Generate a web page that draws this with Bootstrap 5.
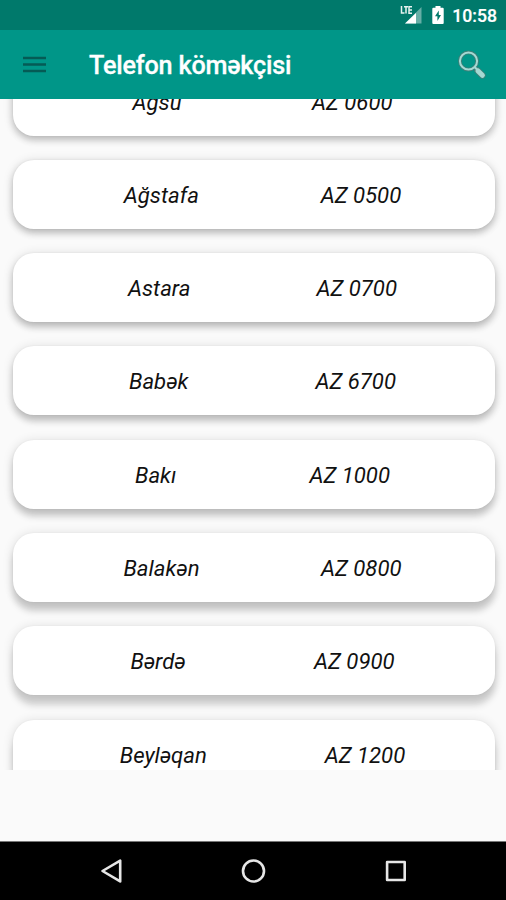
<!DOCTYPE html>
<html lang="az">
<head>
<meta charset="utf-8">
<meta name="viewport" content="width=device-width, initial-scale=1">
<title>Telefon köməkçisi</title>
<link href="https://cdn.jsdelivr.net/npm/bootstrap@5.3.0/dist/css/bootstrap.min.css" rel="stylesheet">
<style>
body { font-family: Roboto, "Noto Sans", sans-serif; background: #fafafa; }
.screen { height: 900px; }
.status-bar { height: 30px; background: #00796b; padding-right: 9px; }
.clock { font-size: 17.6px; font-weight: 500; line-height: 28px; margin-left: 6px; padding-top: 2px; -webkit-text-stroke: .2px #fff; }
.app-bar { height: 68.5px; background: #009688; padding: 2px 19px 0 22px; }
.app-title { font-size: 25.2px; font-weight: 500; letter-spacing: -.2px; line-height: 32px; margin-left: 42px; padding-top: 2px; -webkit-text-stroke: .3px #fff; }
.viewport { height: 671.5px; padding: 0 11.5px 0 12.5px; }
.city-list { margin-top: -32px; }
.city { height: 69px; margin-bottom: 24.3px; border-radius: 21px; padding: 1px 0 0 18px; gap: 28.5px;
  font-size: 22.15px; line-height: 30px; color: #111; font-style: italic;
  box-shadow: 0 var(--drop) var(--soft) rgba(0,0,0,var(--tone)), 0 1px 11px rgba(0,0,0,.12), 0 0 2px rgba(0,0,0,.05); }
.nav-keys { height: 59px; background: #000; border-top: 1px solid #777; }
</style>
</head>
<body>
<div class="screen d-flex flex-column overflow-hidden">
  <header class="flex-shrink-0 text-white">
    <div class="status-bar d-flex align-items-center justify-content-end">
      <svg width="22" height="20" viewBox="0 0 22 20">
        <path d="M21.500 2v16.500H5z" fill="#fff" opacity=".4"/><path d="M16 8v10.500H5z" fill="#fff"/>
        <path d="M1.500 1v7h3M4 1.700h4M6 1.700V8.500M12 1.700H9V8.200h3M9 5h3" fill="none" stroke="#e6f3f1" stroke-width="1.5"/>
      </svg>
      <svg class="ms-2" width="16" height="20" viewBox="0 0 16 20">
        <path d="M5.500 1h5v1.800h2.200q1 0 1 1v14.200q0 1-1 1H3.300q-1 0-1-1V3.800q0-1 1-1h2.200z" fill="#fff"/>
        <path d="M8.800 5.500 5 11.300h2.400V16L11 10H8.800z" fill="#00796b"/>
      </svg>
      <span class="clock">10:58</span>
    </div>
    <div class="app-bar d-flex align-items-center">
      <svg width="25" height="20" viewBox="0 0 25 20"><path d="M1 3h23M1 9.5h23M1 16h23" stroke="#055b55" stroke-width="2.4"/></svg>
      <h1 class="app-title mb-0">Telefon köməkçisi</h1>
      <svg class="ms-auto" width="30" height="30" viewBox="0 0 30 30">
        <path d="m20.5 20.5 4.8 4.8" stroke="#437f78" stroke-width="6.6" stroke-linecap="round"/>
        <circle cx="11.5" cy="11" r="8.6" fill="none" stroke="#3f7f78" stroke-width="3.8"/>
        <circle cx="11.5" cy="11" r="8.6" fill="none" stroke="#a5d9d3" stroke-width="2"/>
        <path d="m17.8 17.3 3 3" stroke="#a5d9d3" stroke-width="2"/>
        <path d="m21 21 4.4 4.3" stroke="#a5d9d3" stroke-width="5" stroke-linecap="round"/>
      </svg>
    </div>
  </header>
  <main class="viewport flex-shrink-0 overflow-hidden">
    <div class="city-list">
      <div class="city bg-white d-flex align-items-center justify-content-evenly" style="--drop:4px;--soft:7px;--tone:.2"><span>Ağsu</span><span>AZ 0600</span></div>
      <div class="city bg-white d-flex align-items-center justify-content-evenly" style="--drop:4px;--soft:7px;--tone:.21"><span>Ağstafa</span><span>AZ 0500</span></div>
      <div class="city bg-white d-flex align-items-center justify-content-evenly" style="--drop:5px;--soft:7px;--tone:.21"><span>Astara</span><span>AZ 0700</span></div>
      <div class="city bg-white d-flex align-items-center justify-content-evenly" style="--drop:6px;--soft:7px;--tone:.2"><span>Babək</span><span>AZ 6700</span></div>
      <div class="city bg-white d-flex align-items-center justify-content-evenly" style="--drop:7px;--soft:7px;--tone:.19"><span>Bakı</span><span>AZ 1000</span></div>
      <div class="city bg-white d-flex align-items-center justify-content-evenly" style="--drop:9px;--soft:7px;--tone:.18"><span>Balakən</span><span>AZ 0800</span></div>
      <div class="city bg-white d-flex align-items-center justify-content-evenly" style="--drop:10px;--soft:7px;--tone:.17"><span>Bərdə</span><span>AZ 0900</span></div>
      <div class="city bg-white d-flex align-items-center justify-content-evenly" style="--drop:11px;--soft:7px;--tone:.17"><span>Beyləqan</span><span>AZ 1200</span></div>
    </div>
  </main>
  <footer class="nav-keys mt-auto flex-shrink-0 d-flex align-items-center justify-content-center">
    <svg width="310" height="28" viewBox="0 0 310 28" fill="none" stroke="#e6e6e6" stroke-width="2.6" stroke-linejoin="round">
      <path d="M22.2 3.6v20.8L4.5 14z"/><circle cx="155.5" cy="14" r="10.5"/><path d="M289.1 5h17.6v18h-17.6z"/>
    </svg>
  </footer>
</div>
<script src="https://cdn.jsdelivr.net/npm/bootstrap@5.3.0/dist/js/bootstrap.bundle.min.js"></script>
</body>
</html>
